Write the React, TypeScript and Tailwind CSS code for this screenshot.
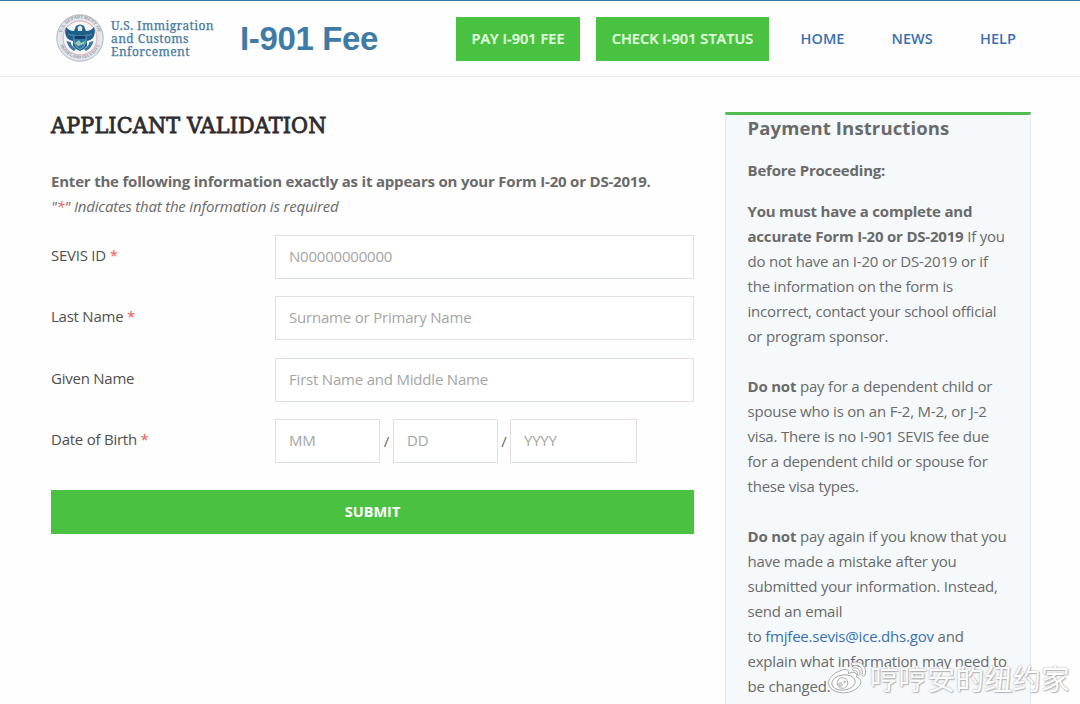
import React from "react";

const INPUT =
  "h-11 min-w-0 border border-[#e6dde4] bg-white px-[13px] pb-[2px] text-[15px] tracking-[-0.2px] text-[#777] placeholder:text-[#a5a5a5] outline-none";

function Seal() {
  return (
    <svg width="48" height="48" viewBox="0 0 48 48" className="shrink-0">
      <defs>
        <path id="ringTop" d="M5.6 27 A18.8 18.8 0 1 1 42.4 27" />
        <path id="ringBottom" d="M2.8 26 A21.4 21.4 0 0 0 45.2 26" />
      </defs>
      <circle cx="24" cy="24" r="23.2" fill="#e4e7eb" stroke="#adb6c2" strokeWidth="1" />
      <circle cx="24" cy="24" r="17" fill="#f7f7f7" stroke="#e2a8b1" strokeWidth="1" />
      <text fontSize="4.6" fontWeight="700" fill="#8a94a3" className="font-['Liberation_Serif',serif]">
        <textPath href="#ringTop" startOffset="50%" textAnchor="middle">U.S. DEPARTMENT OF</textPath>
      </text>
      <text fontSize="4.4" fontWeight="700" fill="#8a94a3" className="font-['Liberation_Serif',serif]">
        <textPath href="#ringBottom" startOffset="50%" textAnchor="middle">HOMELAND SECURITY</textPath>
      </text>
      <path d="M10 13 Q13 17 18 17 L20 12 Q24 9 28 12 L30 17 Q35 17 38 13 Q40 19 37 24 Q34 27 31 27 L31 32 Q28 36 24 37 Q20 36 17 32 L17 27 Q14 27 11 24 Q8 19 10 13Z" fill="#1f5d8b" />
      <path d="M12 20 Q15 22 18 21 M36 20 Q33 22 30 21" stroke="#6fa0bd" strokeWidth="0.8" fill="none" />
      <path d="M21.5 13 L24 11.5 L26.5 13 L26 17 L22 17Z" fill="#dfe9ef" />
      <path d="M18 22 H30 V28 Q29 33.5 24 35.500 Q19 33.5 18 28Z" fill="#2d7aa7" stroke="#a9c8d8" strokeWidth="0.6" />
      <path d="M18.500 22 H29.500 V25 H18.500Z" fill="#123f68" />
      <path d="M19 29 L23 26 L25 29 L29 27 L28 30 L22 32Z" fill="#9fcdb4" />
      <path d="M10.500 27 Q12 34 18 37 L20 35 Q15 32 14.500 28Z M37.500 27 Q36 34 30 37 L28 35 Q33 32 33.500 28Z" fill="#39799f" />
    </svg>
  );
}

function WeiboEye() {
  return (
    <svg width="41" height="36" viewBox="0 0 41 36" fill="#fff" fillOpacity="0.88" stroke="#a0a0a0" strokeWidth="0.9" className="shrink-0">
      <path d="M14 10.500 C18 8.500 22 9 21.500 13.500 C26 11.500 31 12 29.500 17 C34 18.500 35 22 32.500 25.500 C28 32 17 34.500 9 31.500 C0 28 0 21 4.500 16.500 C7 13.500 10.500 11.500 14 10.500Z" />
      <ellipse cx="16.500" cy="22.500" rx="11.800" ry="7.600" transform="rotate(-8 16.500 22.500)" />
      <circle cx="15.500" cy="23" r="5.300" />
      <circle cx="13.500" cy="24.500" r="1.700" fill="#ddd" />
      <circle cx="17.600" cy="22" r="0.800" />
      <path d="M25.500 2.500 C34 0 40.500 7 38 15 C37.300 17 34.500 16 35 14 C36.500 8.500 32.500 4.500 27 5.500 C24.500 6 23.500 3.200 25.500 2.500Z" />
      <path d="M26.500 8 C31 7 34 10.500 32.800 14.500 C32.200 16 30 15.500 30.300 13.800 C30.800 11.500 29.500 10.200 27.200 10.600 C25.200 10.800 25 8.500 26.500 8Z" />
    </svg>
  );
}

function Star() {
  return <span className="text-[#f05858]">*</span>;
}

function Row({ label, required, children }: { label: string; required?: boolean; children: React.ReactNode }) {
  return (
    <div className="flex h-[61.5px] items-start">
      <label className="w-[224px] shrink-0 pt-[8px] text-[15px] leading-[24px] tracking-[-0.24px] text-[#505050]">
        {label} {required && <Star />}
      </label>
      <div className="flex flex-1 items-center">{children}</div>
    </div>
  );
}

export default function App() {
  return (
    <div className="relative h-[704px] w-[1080px] overflow-hidden bg-[#fefefe] font-['Open_Sans',sans-serif] text-[#6a6a6a]">
      <header className="flex h-[77px] items-start border-t border-b border-t-[#3d79a6] border-b-[#ececef] pl-14">
        <div className="flex pt-[13px]">
          <Seal />
          <div className="w-[130px] pt-[5px] pl-[7px] font-['Noto_Serif','DejaVu_Serif',serif] text-[12px] leading-[13px] tracking-[0.42px] whitespace-nowrap text-[#447aa2] [-webkit-text-stroke:0.25px_#447aa2]">
            <div>U.S. Immigration</div>
            <div>and Customs</div>
            <div>Enforcement</div>
          </div>
        </div>
        <div className="w-[222px] pt-[16px] pl-[6px] font-['Liberation_Sans',sans-serif] text-[33px] leading-[43px] font-bold tracking-[-0.35px] whitespace-nowrap text-[#3f7ba7]">
          I-901 Fee
        </div>
        <nav className="flex pt-4 text-[14.5px] leading-[44px] font-semibold tracking-[0.05px] whitespace-nowrap text-[#3a70b2]">
          <a className="w-[124px] bg-[#48c240] text-center text-[#e4ffe0] [-webkit-text-stroke:0.2px_#e4ffe0]">PAY I-901 FEE</a>
          <a className="ml-4 w-[173px] bg-[#48c240] text-center text-[#e4ffe0] [-webkit-text-stroke:0.2px_#e4ffe0]">CHECK I-901 STATUS</a>
          <a className="ml-[31.5px] w-[91px]">HOME</a>
          <a className="w-[88.5px]">NEWS</a>
          <a>HELP</a>
        </nav>
      </header>
      <div className="flex items-start">
        <main className="w-[725px] pr-[31px] pl-[51px]">
          <h1 className="mt-[32px] font-['Roboto_Slab','DejaVu_Serif_Condensed','DejaVu_Serif',serif] text-[23px] leading-[32px] font-normal tracking-[0.2px] whitespace-nowrap text-[#2d2b2f] [-webkit-text-stroke:0.8px_#2d2b2f]">
            APPLICANT VALIDATION
          </h1>
          <p className="mt-[28px] text-[15px] leading-[25px] font-bold tracking-[-0.2px] whitespace-nowrap">
            Enter the following information exactly as it appears on your Form I-20 or DS-2019.
          </p>
          <p className="text-[15px] leading-[25px] tracking-[-0.19px] italic">
            "<Star />" Indicates that the information is required
          </p>
          <form className="mt-[15.5px]">
            <Row label="SEVIS ID" required><input className={INPUT + " w-full"} placeholder="N00000000000" /></Row>
            <Row label="Last Name" required><input className={INPUT + " w-full"} placeholder="Surname or Primary Name" /></Row>
            <Row label="Given Name"><input className={INPUT + " w-full"} placeholder="First Name and Middle Name" /></Row>
            <Row label="Date of Birth" required>
              <input className={INPUT + " w-[105px]"} placeholder="MM" />
              <span className="w-[13px] text-center text-[15px]">/</span>
              <input className={INPUT + " w-[105px]"} placeholder="DD" />
              <span className="w-[12px] text-center text-[15px]">/</span>
              <input className={INPUT + " w-[127px]"} placeholder="YYYY" />
            </Row>
            <button type="button" className="mt-[9.5px] block h-11 w-full bg-[#48c240] text-[14.5px] font-bold text-white">SUBMIT</button>
          </form>
        </main>
        <aside className="mt-[35px] h-[600px] w-[306px] border border-t-[3px] border-[#e3e9ed] border-t-[#52bd53] bg-[#f5f9fb] pl-[21.5px] text-[15px] leading-[25px] tracking-[-0.2px] whitespace-nowrap">
          <h2 className="text-[18.5px] leading-[26px] font-bold tracking-[0.12px]">Payment Instructions</h2>
          <p className="mt-[17px] font-bold">Before Proceeding:</p>
          <p className="mt-[16px]">
            <b>You must have a complete and</b><br />
            <b>accurate Form I-20 or DS-2019</b> If you<br />
            do not have an I-20 or DS-2019 or if<br />
            the information on the form is<br />
            incorrect, contact your school official<br />
            or program sponsor.
          </p>
          <p className="mt-[25px]">
            <b>Do not</b> pay for a dependent child or<br />
            spouse who is on an F-2, M-2, or J-2<br />
            visa. There is no I-901 SEVIS fee due<br />
            for a dependent child or spouse for<br />
            these visa types.
          </p>
          <p className="mt-[25px]">
            <b>Do not</b> pay again if you know that you<br />
            have made a mistake after you<br />
            submitted your information. Instead,<br />
            send an email<br />
            to <a className="text-[#3a6fb5]">fmjfee.sevis@ice.dhs.gov</a> and<br />
            explain what information may need to<br />
            be changed.
          </p>
        </aside>
      </div>
      <div className="absolute top-[659px] left-[827px] flex items-center">
        <WeiboEye />
        <span className="ml-[2px] font-['Noto_Sans_CJK_SC',sans-serif] text-[28.5px] leading-[38px] whitespace-nowrap text-[#fdfdfd] [text-shadow:0_0_2px_#a0a0a0,1px_1px_1px_#bdbdbd]">哼哼安的纽约家</span>
      </div>
    </div>
  );
}
